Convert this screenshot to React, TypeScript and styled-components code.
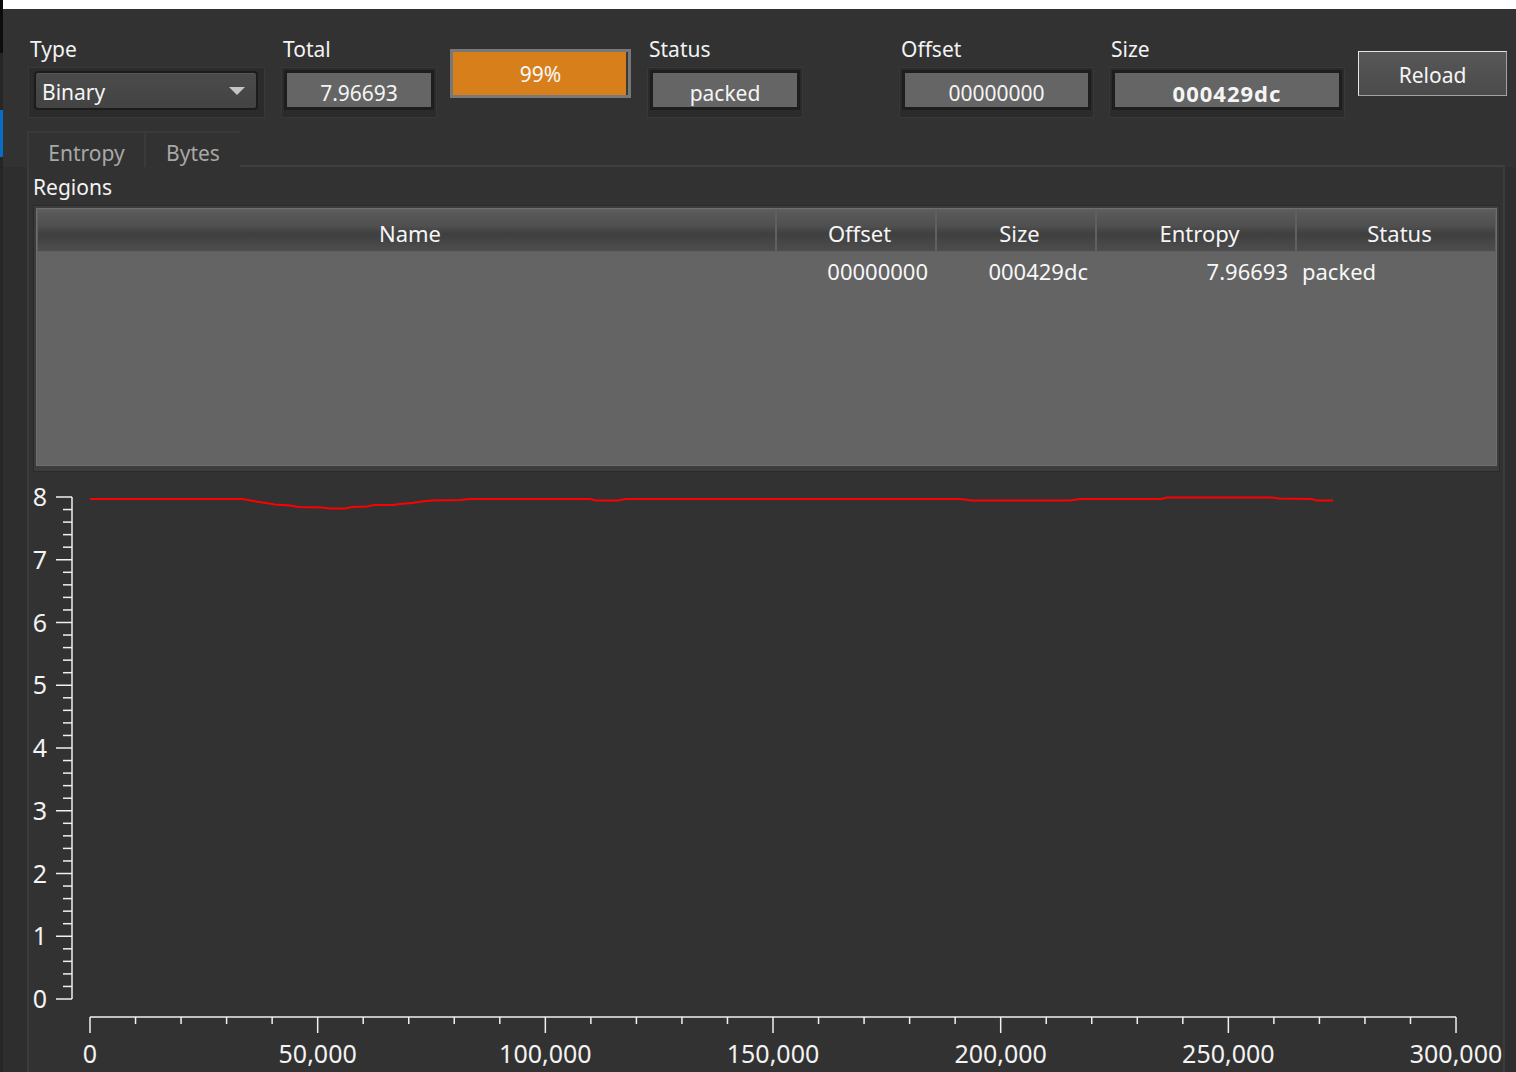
import React from 'react';
import styled, { createGlobalStyle } from 'styled-components';

const Global = createGlobalStyle`
  html, body { margin: 0; padding: 0; background: #323232; }
  body {
    font-family: "Noto Sans", "Open Sans", sans-serif;
    color: #f3f3f3;
    overflow: hidden;
  }
  * { box-sizing: border-box; }
`;

const Window = styled.div`
  display: flex;
  width: 1516px;
  height: 1072px;
  overflow: hidden;
  background: #323232;
`;

const Rail = styled.div`
  width: 3px;
  flex: none;
  display: flex;
  flex-direction: column;
  background: #262626;
`;

const RailSeg = styled.div<{ $h: number; $c: string }>`
  height: ${(p) => p.$h}px;
  background: ${(p) => p.$c};
  flex: none;
`;

const Main = styled.div`
  flex: 1;
  min-width: 0;
  display: flex;
  flex-direction: column;
`;

const TopStrip = styled.div`
  height: 9px;
  flex: none;
  background: #ffffff;
`;

const Toolbar = styled.div`
  height: 122px;
  flex: none;
  display: flex;
  align-items: flex-start;
  padding-left: 25px;
`;

const FieldGroup = styled.div<{ $w: number; $gap: number }>`
  width: ${(p) => p.$w}px;
  margin-left: ${(p) => p.$gap}px;
  padding-top: 25px;
  display: flex;
  flex-direction: column;
  flex: none;
`;

const Label = styled.div`
  font-size: 21px;
  line-height: 30px;
  height: 26px;
  padding-left: 2px;
  margin-bottom: 7px;
  color: #f3f3f3;
  white-space: nowrap;
`;

const Frame = styled.div`
  height: 51px;
  border: 1px solid #383838;
  background: #2b2b2b;
  padding: 2px 2px 7px;
  display: flex;
`;

const ValueBox = styled.div<{ $bold?: boolean }>`
  flex: 1;
  border: 3px solid #1e1e1e;
  background: #656565;
  display: flex;
  align-items: center;
  justify-content: center;
  font-size: ${(p) => (p.$bold ? 22 : 21)}px;
  font-weight: ${(p) => (p.$bold ? 700 : 400)};
  letter-spacing: ${(p) => (p.$bold ? 1 : 0)}px;
  color: #f5f5f5;
  padding-top: 5px;
`;

const Combo = styled.div`
  flex: 1;
  margin: 1px 4px 0 3px;
  border: 2px solid #1c1c1c;
  border-radius: 4px;
  background: linear-gradient(#4b4b4b, #434343);
  box-shadow: inset 0 1px 0 #565656;
  display: flex;
  align-items: center;
  justify-content: space-between;
  padding: 2px 11px 0 6px;
  font-size: 21px;
  color: #f5f5f5;
`;

const Caret = styled.span`
  width: 0;
  height: 0;
  margin-bottom: 2px;
  border-left: 8px solid transparent;
  border-right: 8px solid transparent;
  border-top: 8px solid #c4c4c4;
`;

const Progress = styled.div<{ $gap: number }>`
  width: 181px;
  height: 49px;
  margin-left: ${(p) => p.$gap}px;
  margin-top: 40px;
  flex: none;
  border: 3px solid #787878;
  background: #3a3a3a;
  display: grid;
`;

const ProgressFill = styled.div`
  grid-area: 1 / 1;
  height: 100%;
  background: #d7801b;
`;

const ProgressText = styled.div`
  grid-area: 1 / 1;
  display: flex;
  align-items: center;
  justify-content: center;
  font-size: 21px;
  color: #f7f7f7;
  padding-top: 1px;
`;

const ReloadButton = styled.button<{ $gap: number }>`
  width: 149px;
  height: 45px;
  margin-left: ${(p) => p.$gap}px;
  margin-top: 42px;
  flex: none;
  border: 1px solid;
  border-color: #e6e6e6 #a3a3a3 #a3a3a3 #e6e6e6;
  background: linear-gradient(#575757, #4b4b4b);
  color: #f5f5f5;
  font-family: inherit;
  font-size: 21px;
  padding: 2px 0 0;
`;

const TabBar = styled.div`
  height: 36px;
  flex: none;
  display: flex;
  margin-left: 24px;
  margin-right: 11px;
`;

const Tab = styled.div<{ $w: number }>`
  width: ${(p) => p.$w}px;
  border-top: 2px solid #3a3a3a;
  border-left: 2px solid #3a3a3a;
  display: flex;
  align-items: center;
  justify-content: center;
  padding-top: 5px;
  font-size: 21px;
  color: #a8a8a8;
`;

const TabFill = styled.div`
  flex: 1;
  border-bottom: 2px solid #3f3f3f;
`;

const PaneRow = styled.div`
  flex: 1;
  display: flex;
  padding-left: 24px;
  background: #2e2e2e;
`;

const Pane = styled.div`
  width: 1478px;
  flex: none;
  background: #323232;
  border-left: 2px solid #3c3c3c;
  border-right: 2px solid #3c3c3c;
  display: flex;
  flex-direction: column;
`;

const SectionLabel = styled.div`
  font-size: 21px;
  line-height: 26px;
  height: 26px;
  margin: 7px 0 0 4px;
  color: #f3f3f3;
`;

const TableFrame = styled.div`
  width: 1467px;
  height: 267px;
  margin: 5px 0 0 4px;
  flex: none;
  border: 1px solid #2a2a2a;
  background: #3c3c3c;
  padding: 2px 2px 5px;
  display: flex;
`;

const Table = styled.div`
  flex: 1;
  border: 1px solid #6e6e6e;
  background: #646464;
  display: flex;
  flex-direction: column;
`;

const Grid = styled.div`
  display: grid;
  grid-template-columns: 739px 160px 160px 200px 200px;
`;

const HeadCell = styled.div`
  height: 43px;
  border: 1px solid #606060;
  background: linear-gradient(
    to bottom,
    #5d5d5d 0%,
    #575757 12%,
    #505050 38%,
    #3f3f3f 58%,
    #454545 76%,
    #4e4e4e 100%
  );
  display: flex;
  align-items: center;
  justify-content: center;
  padding: 4px 0 0 7px;
  font-size: 22px;
  color: #f5f5f5;
`;

const Cell = styled.div<{ $align: 'left' | 'right' }>`
  height: 38px;
  display: flex;
  align-items: center;
  justify-content: ${(p) => (p.$align === 'right' ? 'flex-end' : 'flex-start')};
  padding: 0 8px 0 6px;
  font-size: 22px;
  color: #f7f7f7;
  white-space: nowrap;
`;

const ChartSvg = styled.svg`
  display: block;
  flex: none;
  font-family: "Noto Sans", "Open Sans", sans-serif;
`;

const Y0 = 999;
const YU = 62.75;
const X0 = 90;
const XU = 227.67;

const line: [number, number][] = [
  [90, 499], [242, 499], [248, 500], [256, 501.5], [266, 503], [275, 504.5],
  [290, 505.5], [298, 507], [322, 507.5], [330, 508.5], [345, 508.5], [352, 507],
  [367, 506.5], [374, 505], [393, 505], [400, 504], [412, 503], [422, 501.5],
  [432, 500.5], [460, 500], [470, 499], [590, 499], [596, 500.5], [618, 500.5],
  [626, 499], [960, 499], [972, 500.5], [1070, 500.5], [1080, 499], [1161, 499],
  [1167, 497.5], [1272, 497.5], [1279, 498.5], [1311, 499], [1317, 500.5], [1333, 500.5],
];

const Chart: React.FC = () => {
  const yTicks: React.ReactNode[] = [];
  for (let i = 0; i <= 8; i++) {
    const y = Y0 - i * YU;
    yTicks.push(<line key={`ym${i}`} x1={56} x2={72} y1={y} y2={y} />);
    if (i < 8) {
      for (let j = 1; j < 5; j++) {
        const ym = y - j * (YU / 5);
        yTicks.push(<line key={`yn${i}-${j}`} x1={63} x2={72} y1={ym} y2={ym} />);
      }
    }
  }
  const xTicks: React.ReactNode[] = [];
  for (let i = 0; i <= 6; i++) {
    const x = X0 + i * XU;
    xTicks.push(<line key={`xm${i}`} x1={x} x2={x} y1={1017} y2={1033} />);
    if (i < 6) {
      for (let j = 1; j < 5; j++) {
        const xm = x + j * (XU / 5);
        xTicks.push(<line key={`xn${i}-${j}`} x1={xm} x2={xm} y1={1017} y2={1024} />);
      }
    }
  }
  const xLabels = ['0', '50,000', '100,000', '150,000', '200,000', '250,000', '300,000'];
  return (
    <ChartSvg width={1474} height={600} viewBox="29 472 1474 600">
      <g stroke="#f0f0f0" strokeWidth={1.5}>
        <line x1={72} x2={72} y1={Y0 - 8 * YU} y2={Y0} />
        {yTicks}
        <line x1={X0} x2={X0 + 6 * XU} y1={1017} y2={1017} />
        {xTicks}
      </g>
      <g fill="#f3f3f3" fontSize={25}>
        {Array.from({ length: 9 }, (_, i) => (
          <text key={`yl${i}`} x={47} y={Y0 - i * YU + 9} textAnchor="end">
            {i}
          </text>
        ))}
        {xLabels.map((l, i) => (
          <text key={`xl${l}`} x={X0 + i * XU} y={1063} textAnchor="middle">
            {l}
          </text>
        ))}
      </g>
      <polyline
        points={line.map((p) => p.join(',')).join(' ')}
        fill="none"
        stroke="#ff0000"
        strokeWidth={2}
      />
    </ChartSvg>
  );
};

const columns = ['Name', 'Offset', 'Size', 'Entropy', 'Status'];

export default function App() {
  const percent = 99;
  return (
    <>
      <Global />
      <Window>
        <Rail>
          <RailSeg $h={53} $c="#0c0c0c" />
          <RailSeg $h={57} $c="#262626" />
          <RailSeg $h={47} $c="#0a6cc4" />
        </Rail>
        <Main>
          <TopStrip />
          <Toolbar>
            <FieldGroup $w={237} $gap={0}>
              <Label>Type</Label>
              <Frame>
                <Combo>
                  <span>Binary</span>
                  <Caret />
                </Combo>
              </Frame>
            </FieldGroup>
            <FieldGroup $w={156} $gap={16}>
              <Label>Total</Label>
              <Frame>
                <ValueBox>7.96693</ValueBox>
              </Frame>
            </FieldGroup>
            <Progress $gap={13}>
              <ProgressFill style={{ width: `${percent}%` }} />
              <ProgressText>{percent}%</ProgressText>
            </Progress>
            <FieldGroup $w={156} $gap={16}>
              <Label>Status</Label>
              <Frame>
                <ValueBox>packed</ValueBox>
              </Frame>
            </FieldGroup>
            <FieldGroup $w={195} $gap={96}>
              <Label>Offset</Label>
              <Frame>
                <ValueBox>00000000</ValueBox>
              </Frame>
            </FieldGroup>
            <FieldGroup $w={236} $gap={15}>
              <Label>Size</Label>
              <Frame>
                <ValueBox $bold>000429dc</ValueBox>
              </Frame>
            </FieldGroup>
            <ReloadButton $gap={13}>Reload</ReloadButton>
          </Toolbar>
          <TabBar>
            <Tab $w={117}>Entropy</Tab>
            <Tab $w={96}>Bytes</Tab>
            <TabFill />
          </TabBar>
          <PaneRow>
            <Pane>
              <SectionLabel>Regions</SectionLabel>
              <TableFrame>
                <Table>
                  <Grid>
                    {columns.map((c) => (
                      <HeadCell key={c}>{c}</HeadCell>
                    ))}
                  </Grid>
                  <Grid>
                    <Cell $align="left" />
                    <Cell $align="right">00000000</Cell>
                    <Cell $align="right">000429dc</Cell>
                    <Cell $align="right">7.96693</Cell>
                    <Cell $align="left">packed</Cell>
                  </Grid>
                </Table>
              </TableFrame>
              <Chart />
            </Pane>
          </PaneRow>
        </Main>
      </Window>
    </>
  );
}
